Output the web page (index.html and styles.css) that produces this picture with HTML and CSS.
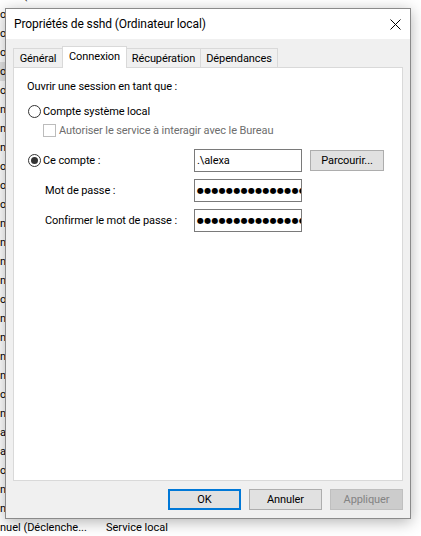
FILE: index.html
```html
<!DOCTYPE html>
<html>
  <head>
    <meta charset="utf-8">
    <meta name="viewport" content="width=device-width, initial-scale=1.0">
    <title>Propriétés de sshd (Ordinateur local)</title>
    <link rel="stylesheet" href="styles.css">
  </head>
  <body>
    <div class="services">
      <div class="svc"><span class="startup">nuel (Déclenche...</span><span class="account">Service local</span></div>
      <div class="svc"><span class="startup">o</span></div>
      <div class="svc"><span class="startup">o</span></div>
      <div class="svc"><span class="startup">o</span></div>
      <div class="svc selected"><span class="startup">o</span></div>
      <div class="svc"><span class="startup">o</span></div>
      <div class="svc"><span class="startup">n</span></div>
      <div class="svc"><span class="startup">n</span></div>
      <div class="svc"><span class="startup">n</span></div>
      <div class="svc"><span class="startup">o</span></div>
      <div class="svc"><span class="startup">o</span></div>
      <div class="svc"><span class="startup">o</span></div>
      <div class="svc"><span class="startup">n</span></div>
      <div class="svc"><span class="startup">n</span></div>
      <div class="svc"><span class="startup">n</span></div>
      <div class="svc"><span class="startup">n</span></div>
      <div class="svc"><span class="startup">o</span></div>
      <div class="svc"><span class="startup">n</span></div>
      <div class="svc"><span class="startup">n</span></div>
      <div class="svc"><span class="startup">n</span></div>
      <div class="svc"><span class="startup">n</span></div>
      <div class="svc"><span class="startup">o</span></div>
      <div class="svc"><span class="startup">n</span></div>
      <div class="svc"><span class="startup">a</span></div>
      <div class="svc"><span class="startup">a</span></div>
      <div class="svc"><span class="startup">o</span></div>
      <div class="svc"><span class="startup">n</span></div>
      <div class="svc"><span class="startup">n</span></div>
      <div class="svc"><span class="startup">nuel (Déclenche...</span><span class="account">Service local</span></div>
    </div>

    <div class="dialog">
      <div class="titlebar">
        <span class="title">Propriétés de sshd (Ordinateur local)</span>
        <svg class="close" width="11" height="11" viewBox="0 0 11 11">
          <path d="M0.5 0.5 L10.5 10.5 M10.5 0.5 L0.5 10.5" stroke="#000" stroke-width="1" fill="none"/>
        </svg>
      </div>
      <div class="dlg-body">
        <div class="tabs">
          <div class="tab t-general">Général</div>
          <div class="tab t-logon active">Connexion</div>
          <div class="tab t-recovery">Récupération</div>
          <div class="tab t-deps">Dépendances</div>
        </div>
        <div class="panel">
          <div class="lead">Ouvrir une session en tant que :</div>
          <div class="opt opt-local">
            <span class="radio"></span>
            <span>Compte système local</span>
          </div>
          <div class="opt opt-desktop disabled">
            <span class="checkbox"></span>
            <span>Autoriser le service à interagir avec le Bureau</span>
          </div>
          <div class="account-grid">
            <div class="opt">
              <span class="radio on"></span>
              <span>Ce compte :</span>
            </div>
            <div class="field">.\alexa</div>
            <div class="btn browse">Parcourir...</div>
            <div class="field-label">Mot de passe :</div>
            <div class="field dots">●●●●●●●●●●●●●●●●●</div>
            <div></div>
            <div class="field-label">Confirmer le mot de passe :</div>
            <div class="field dots">●●●●●●●●●●●●●●●●●</div>
            <div></div>
          </div>
        </div>
        <div class="buttons">
          <div class="btn default">OK</div>
          <div class="btn">Annuler</div>
          <div class="btn disabled">Appliquer</div>
        </div>
      </div>
    </div>
  </body>
</html>
```

FILE: styles.css
```css
html, body {
  margin: 0;
  padding: 0;
  background-color: #fff;
  color: #000;
  font-family: Roboto, 'Liberation Sans', sans-serif;
  font-size: 11px;
  overflow: hidden;
}
.services {
  margin-top: -14px;
}
.svc {
  display: flex;
  align-items: center;
  width: 300px;
  height: 19px;
  white-space: nowrap;
}
.svc.selected {
  background-color: #e5e5e5;
}
.startup {
  width: 106px;
  flex-shrink: 0;
}
.dialog {
  position: absolute;
  left: 5px;
  top: 8px;
  width: 406px;
  height: 511px;
  box-sizing: border-box;
  border: 1px solid #8a8a8a;
  background-color: #f0f0f0;
  box-shadow: 0 3px 14px rgba(0, 0, 0, 0.3);
  display: flex;
  flex-direction: column;
  letter-spacing: -0.1px;
}
.titlebar {
  height: 30px;
  background-color: #fff;
  display: flex;
  align-items: center;
  padding: 0 9px 0 8px;
}
.title {
  font-size: 12px;
}
.close {
  margin-left: auto;
}
.dlg-body {
  flex: 1;
  padding: 7px 7px 8px;
  display: flex;
  flex-direction: column;
}
.tabs {
  display: flex;
  align-items: flex-end;
  height: 21px;
}
.tab {
  box-sizing: border-box;
  height: 19px;
  border: 1px solid #d9d9d9;
  border-bottom: none;
  background-color: #f0f0f0;
  display: flex;
  align-items: center;
  justify-content: center;
  margin-left: -1px;
}
.tab.active {
  height: 22px;
  margin-bottom: -1px;
  padding-bottom: 2px;
  background-color: #fff;
  position: relative;
  z-index: 1;
}
.t-general {
  width: 50px;
  margin-left: 0;
}
.t-logon {
  width: 65px;
}
.t-recovery {
  width: 75px;
}
.t-deps {
  width: 78px;
}
.panel {
  height: 414px;
  box-sizing: border-box;
  border: 1px solid #d9d9d9;
  background-color: #fff;
  padding: 11px 0 0 13px;
}
.lead {
  height: 16px;
  line-height: 16px;
}
.opt {
  display: flex;
  align-items: center;
  gap: 2px;
  height: 16px;
}
.opt-local {
  margin-top: 8px;
  padding-left: 1px;
}
.opt-desktop {
  margin-top: 3px;
  padding-left: 16px;
  gap: 3px;
}
.disabled {
  color: #6d6d6d;
}
.radio {
  width: 13px;
  height: 13px;
  box-sizing: border-box;
  border: 1px solid #333;
  border-radius: 50%;
  display: flex;
  align-items: center;
  justify-content: center;
}
.radio.on::after {
  content: '';
  width: 7px;
  height: 7px;
  border-radius: 50%;
  background-color: #333;
}
.checkbox {
  width: 13px;
  height: 13px;
  box-sizing: border-box;
  border: 1px solid #bcbcbc;
  background-color: #fff;
}
.account-grid {
  margin-top: 11px;
  display: grid;
  grid-template-columns: 159px 108px 74px;
  grid-template-rows: 23px 23px 23px;
  column-gap: 8px;
  row-gap: 7px;
  align-items: center;
}
.account-grid .opt {
  padding-left: 1px;
  height: 23px;
}
.field-label {
  padding-left: 18px;
  white-space: nowrap;
}
.field {
  height: 23px;
  box-sizing: border-box;
  border: 1px solid #7a7a7a;
  background-color: #fff;
  padding-left: 2px;
  display: flex;
  align-items: center;
  overflow: hidden;
  white-space: nowrap;
}
.dots {
  font-family: 'DejaVu Sans', sans-serif;
  font-size: 8px;
  letter-spacing: 0.3px;
}
.btn {
  box-sizing: border-box;
  height: 21px;
  border: 1px solid #adadad;
  background-color: #e1e1e1;
  display: flex;
  align-items: center;
  justify-content: center;
}
.browse {
  width: 74px;
}
.buttons {
  margin-top: 8px;
  display: flex;
  justify-content: flex-end;
  gap: 8px;
}
.buttons .btn {
  width: 73px;
}
.btn.default {
  border: 2px solid #0078d7;
}
.btn.disabled {
  border-color: #bfbfbf;
  background-color: #ccc;
  color: #838383;
}
```
